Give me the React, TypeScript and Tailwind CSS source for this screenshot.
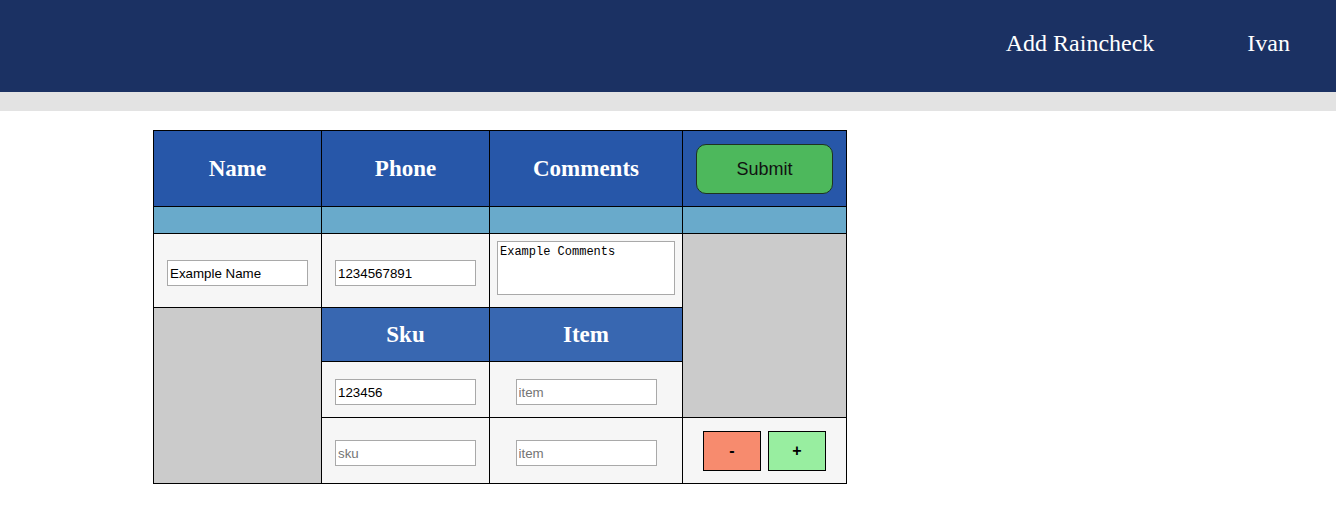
import React from "react";

const serif = { fontFamily: '"Liberation Serif", "Times New Roman", serif' };

function Hdr({ children, light }: { children: React.ReactNode; light?: boolean }) {
  return (
    <div
      className={`flex items-center justify-center pt-[2px] font-bold text-white text-[23px] ${light ? "bg-[#3867b1]" : "bg-[#2757a9]"}`}
      style={serif}
    >
      {children}
    </div>
  );
}

function Inp({ value, placeholder }: { value?: string; placeholder?: string }) {
  return (
    <input
      readOnly
      defaultValue={value}
      placeholder={placeholder}
      className="w-[141px] h-[26px] border border-[#a9a9a9] bg-white px-[2px] text-[13.33px] text-black placeholder:text-[#757575] outline-none"
      style={{ fontFamily: '"Liberation Sans", Arial, sans-serif' }}
    />
  );
}

export default function App() {
  return (
    <div className="min-h-[532px] bg-white">
      <div className="h-[92px] bg-[#1b3163] flex items-center justify-end pr-[46px] pb-[6px] text-white text-[24px]" style={serif}>
        <span className="mr-[93px]">Add Raincheck</span>
        <span>Ivan</span>
      </div>
      <div className="h-[19px] bg-[#e3e3e3]" />
      <div className="ml-[153px] mt-[19px] inline-grid grid-cols-[167px_167px_192px_163px] grid-rows-[75px_26px_73px_53px_55px_65px] gap-px p-px bg-black">
        <Hdr>Name</Hdr>
        <Hdr>Phone</Hdr>
        <Hdr>Comments</Hdr>
        <div className="bg-[#2757a9] flex items-center justify-center">
          <button
            className="w-[137px] h-[50px] pt-[2px] rounded-[10px] border border-[#1e3320] bg-[#4db85c] text-[18px] text-[#111]"
            style={{ fontFamily: '"Liberation Sans", Arial, sans-serif' }}
          >
            Submit
          </button>
        </div>

        <div className="bg-[#69aacb]" />
        <div className="bg-[#69aacb]" />
        <div className="bg-[#69aacb]" />
        <div className="bg-[#69aacb]" />

        <div className="bg-[#f6f6f6] flex justify-center pt-[26px]">
          <Inp value="Example Name" />
        </div>
        <div className="bg-[#f6f6f6] flex justify-center pt-[26px]">
          <Inp value="1234567891" />
        </div>
        <div className="bg-[#f6f6f6] flex justify-center pt-[7px]">
          <textarea
            readOnly
            defaultValue="Example Comments"
            className="w-[178px] h-[54px] border border-[#a9a9a9] bg-white px-[2px] pt-[3px] text-[12px] leading-[14px] text-black resize-none outline-none"
            style={{ fontFamily: '"Liberation Mono", "DejaVu Sans Mono", monospace' }}
          />
        </div>
        <div className="bg-[#cbcbcb] col-start-4 row-start-3 row-span-3" />

        <div className="bg-[#cbcbcb] col-start-1 row-start-4 row-span-3" />
        <Hdr light>Sku</Hdr>
        <Hdr light>Item</Hdr>

        <div className="bg-[#f6f6f6] flex justify-center pt-[17px] col-start-2 row-start-5">
          <Inp value="123456" />
        </div>
        <div className="bg-[#f6f6f6] flex justify-center pt-[17px] col-start-3 row-start-5">
          <Inp placeholder="item" />
        </div>

        <div className="bg-[#f6f6f6] flex justify-center pt-[22px] col-start-2 row-start-6">
          <Inp placeholder="sku" />
        </div>
        <div className="bg-[#f6f6f6] flex justify-center pt-[22px] col-start-3 row-start-6">
          <Inp placeholder="item" />
        </div>
        <div className="bg-[#f6f6f6] flex items-center justify-center gap-[7px] col-start-4 row-start-6">
          <button
            className="w-[58px] h-[40px] border border-black bg-[#f78b6e] text-[16px] font-bold text-black"
            style={{ fontFamily: '"Liberation Sans", Arial, sans-serif' }}
          >
            -
          </button>
          <button
            className="w-[58px] h-[40px] border border-black bg-[#98eea0] text-[16px] font-bold text-black"
            style={{ fontFamily: '"Liberation Sans", Arial, sans-serif' }}
          >
            +
          </button>
        </div>
      </div>
    </div>
  );
}
